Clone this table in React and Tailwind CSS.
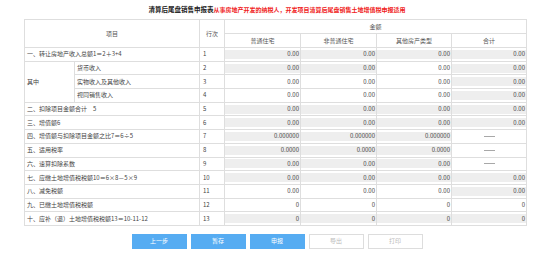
import React from "react";

const rows = [
  { label: "一、转让房地产收入总额1＝2＋3+4", n: "1", cells: [["g", "0.00"], ["g", "0.00"], ["g", "0.00"], ["g", "0.00"]] },
  { sub: true, first: true, label: "货币收入", n: "2", cells: [["g", "0.00"], ["g", "0.00"], ["w", "0.00"], ["g", "0.00"]] },
  { sub: true, label: "实物收入及其他收入", n: "3", cells: [["w", "0.00"], ["w", "0.00"], ["w", "0.00"], ["g", "0.00"]] },
  { sub: true, label: "视同销售收入", n: "4", cells: [["w", "0.00"], ["w", "0.00"], ["w", "0.00"], ["g", "0.00"]] },
  { label: "二、扣除项目金额合计　5", n: "5", cells: [["g", "0.00"], ["g", "0.00"], ["g", "0.00"], ["g", "0.00"]] },
  { label: "三、增值额6", n: "6", cells: [["g", "0.00"], ["g", "0.00"], ["g", "0.00"], ["g", "0.00"]] },
  { label: "四、增值额与扣除项目金额之比7＝6÷5", n: "7", cells: [["g", "0.000000"], ["g", "0.000000"], ["g", "0.000000"], ["d", ""]] },
  { label: "五、适用税率", n: "8", cells: [["g", "0.0000"], ["g", "0.0000"], ["g", "0.0000"], ["d", ""]] },
  { label: "六、速算扣除系数", n: "9", cells: [["g", "0.00"], ["g", "0.00"], ["g", "0.00"], ["d", ""]] },
  { label: "七、应缴土地增值税税额10＝6×8－5×9", n: "10", cells: [["g", "0.00"], ["g", "0.00"], ["g", "0.00"], ["g", "0.00"]] },
  { label: "八、减免税额", n: "11", cells: [["w", "0.00"], ["w", "0.00"], ["w", "0.00"], ["g", "0.00"]] },
  { label: "九、已缴土地增值税税额", n: "12", cells: [["w", "0"], ["w", "0"], ["w", "0"], ["w", "0"]] },
  { label: "十、应补（退）土地增值税税额13＝10-11-12", n: "13", cells: [["g", "0"], ["g", "0"], ["g", "0"], ["g", "0"]] },
];

const cellB = "border-r border-b border-[#dedede]";

function Cell({ kind, value }) {
  if (kind === "d") {
    return (
      <div className={cellB + " flex justify-center items-center"}>
        <div className="w-[11px] h-px bg-[#a8a8a8]" />
      </div>
    );
  }
  return (
    <div className={cellB + " flex items-center"}>
      <div
        className={
          "w-full h-[9px] flex items-center justify-end pr-[1px] text-[#444] " +
          (kind === "g" ? "bg-[#eeeeee]" : "bg-white")
        }
      >
        {value}
      </div>
    </div>
  );
}

export default function App() {
  return (
    <div className="w-[554px] h-[253px] bg-white text-[6px] leading-none text-[#444] font-['Noto_Sans_CJK_SC','Noto_Sans',sans-serif]">
      <div className="h-[19px] flex items-center justify-center pb-[1px]">
        <span className="text-[6.5px] font-bold text-[#222]">清算后尾盘销售申报表</span>
        <span className="text-[6px] font-bold text-[#f01c1c] mt-[1px]">
          从事房地产开发的纳税人，开发项目清算后尾盘销售土地增值税申报适用
        </span>
      </div>
      <div className="ml-[24px] w-fit grid grid-cols-[50px_125px_25px_76px_76px_75px_75px] grid-rows-[14px_14px_repeat(13,13.7px)] border-l border-t border-[#dedede]">
        <div className={cellB + " col-span-2 row-span-2 flex items-center justify-center text-[#555]"}>项目</div>
        <div className={cellB + " row-span-2 flex items-center justify-center text-[#555]"}>行次</div>
        <div className={cellB + " col-span-4 flex items-center justify-center text-[#555]"}>金额</div>
        <div className={cellB + " flex items-center justify-center text-[#555]"}>普通住宅</div>
        <div className={cellB + " flex items-center justify-center text-[#555]"}>非普通住宅</div>
        <div className={cellB + " flex items-center justify-center text-[#555]"}>其他房产类型</div>
        <div className={cellB + " flex items-center justify-center text-[#555]"}>合计</div>
        {rows.map((r) => (
          <React.Fragment key={r.n}>
            {r.sub ? (
              <>
                {r.first && (
                  <div className={cellB + " row-span-3 flex items-center pl-[2px]"}>其中</div>
                )}
                <div className={cellB + " flex items-center pl-[2px] whitespace-nowrap"}>{r.label}</div>
              </>
            ) : (
              <div className={cellB + " col-span-2 flex items-center pl-[2px] whitespace-nowrap"}>{r.label}</div>
            )}
            <div className={cellB + " flex items-center pl-[3px]"}>{r.n}</div>
            {r.cells.map((c, i) => (
              <Cell key={i} kind={c[0]} value={c[1]} />
            ))}
          </React.Fragment>
        ))}
      </div>
      <div className="mt-[8px] flex justify-center gap-[4px]">
        <button className="w-[55px] h-[15px] bg-[#56acf2] text-white text-[6px] flex items-center justify-center">上一步</button>
        <button className="w-[55px] h-[15px] bg-[#56acf2] text-white text-[6px] flex items-center justify-center">暂存</button>
        <button className="w-[55px] h-[15px] bg-[#56acf2] text-white text-[6px] flex items-center justify-center">申报</button>
        <button className="w-[55px] h-[15px] bg-white border border-[#dddddd] text-[#bbbbbb] text-[6px] flex items-center justify-center">导出</button>
        <button className="w-[55px] h-[15px] bg-white border border-[#dddddd] text-[#bbbbbb] text-[6px] flex items-center justify-center">打印</button>
      </div>
    </div>
  );
}
